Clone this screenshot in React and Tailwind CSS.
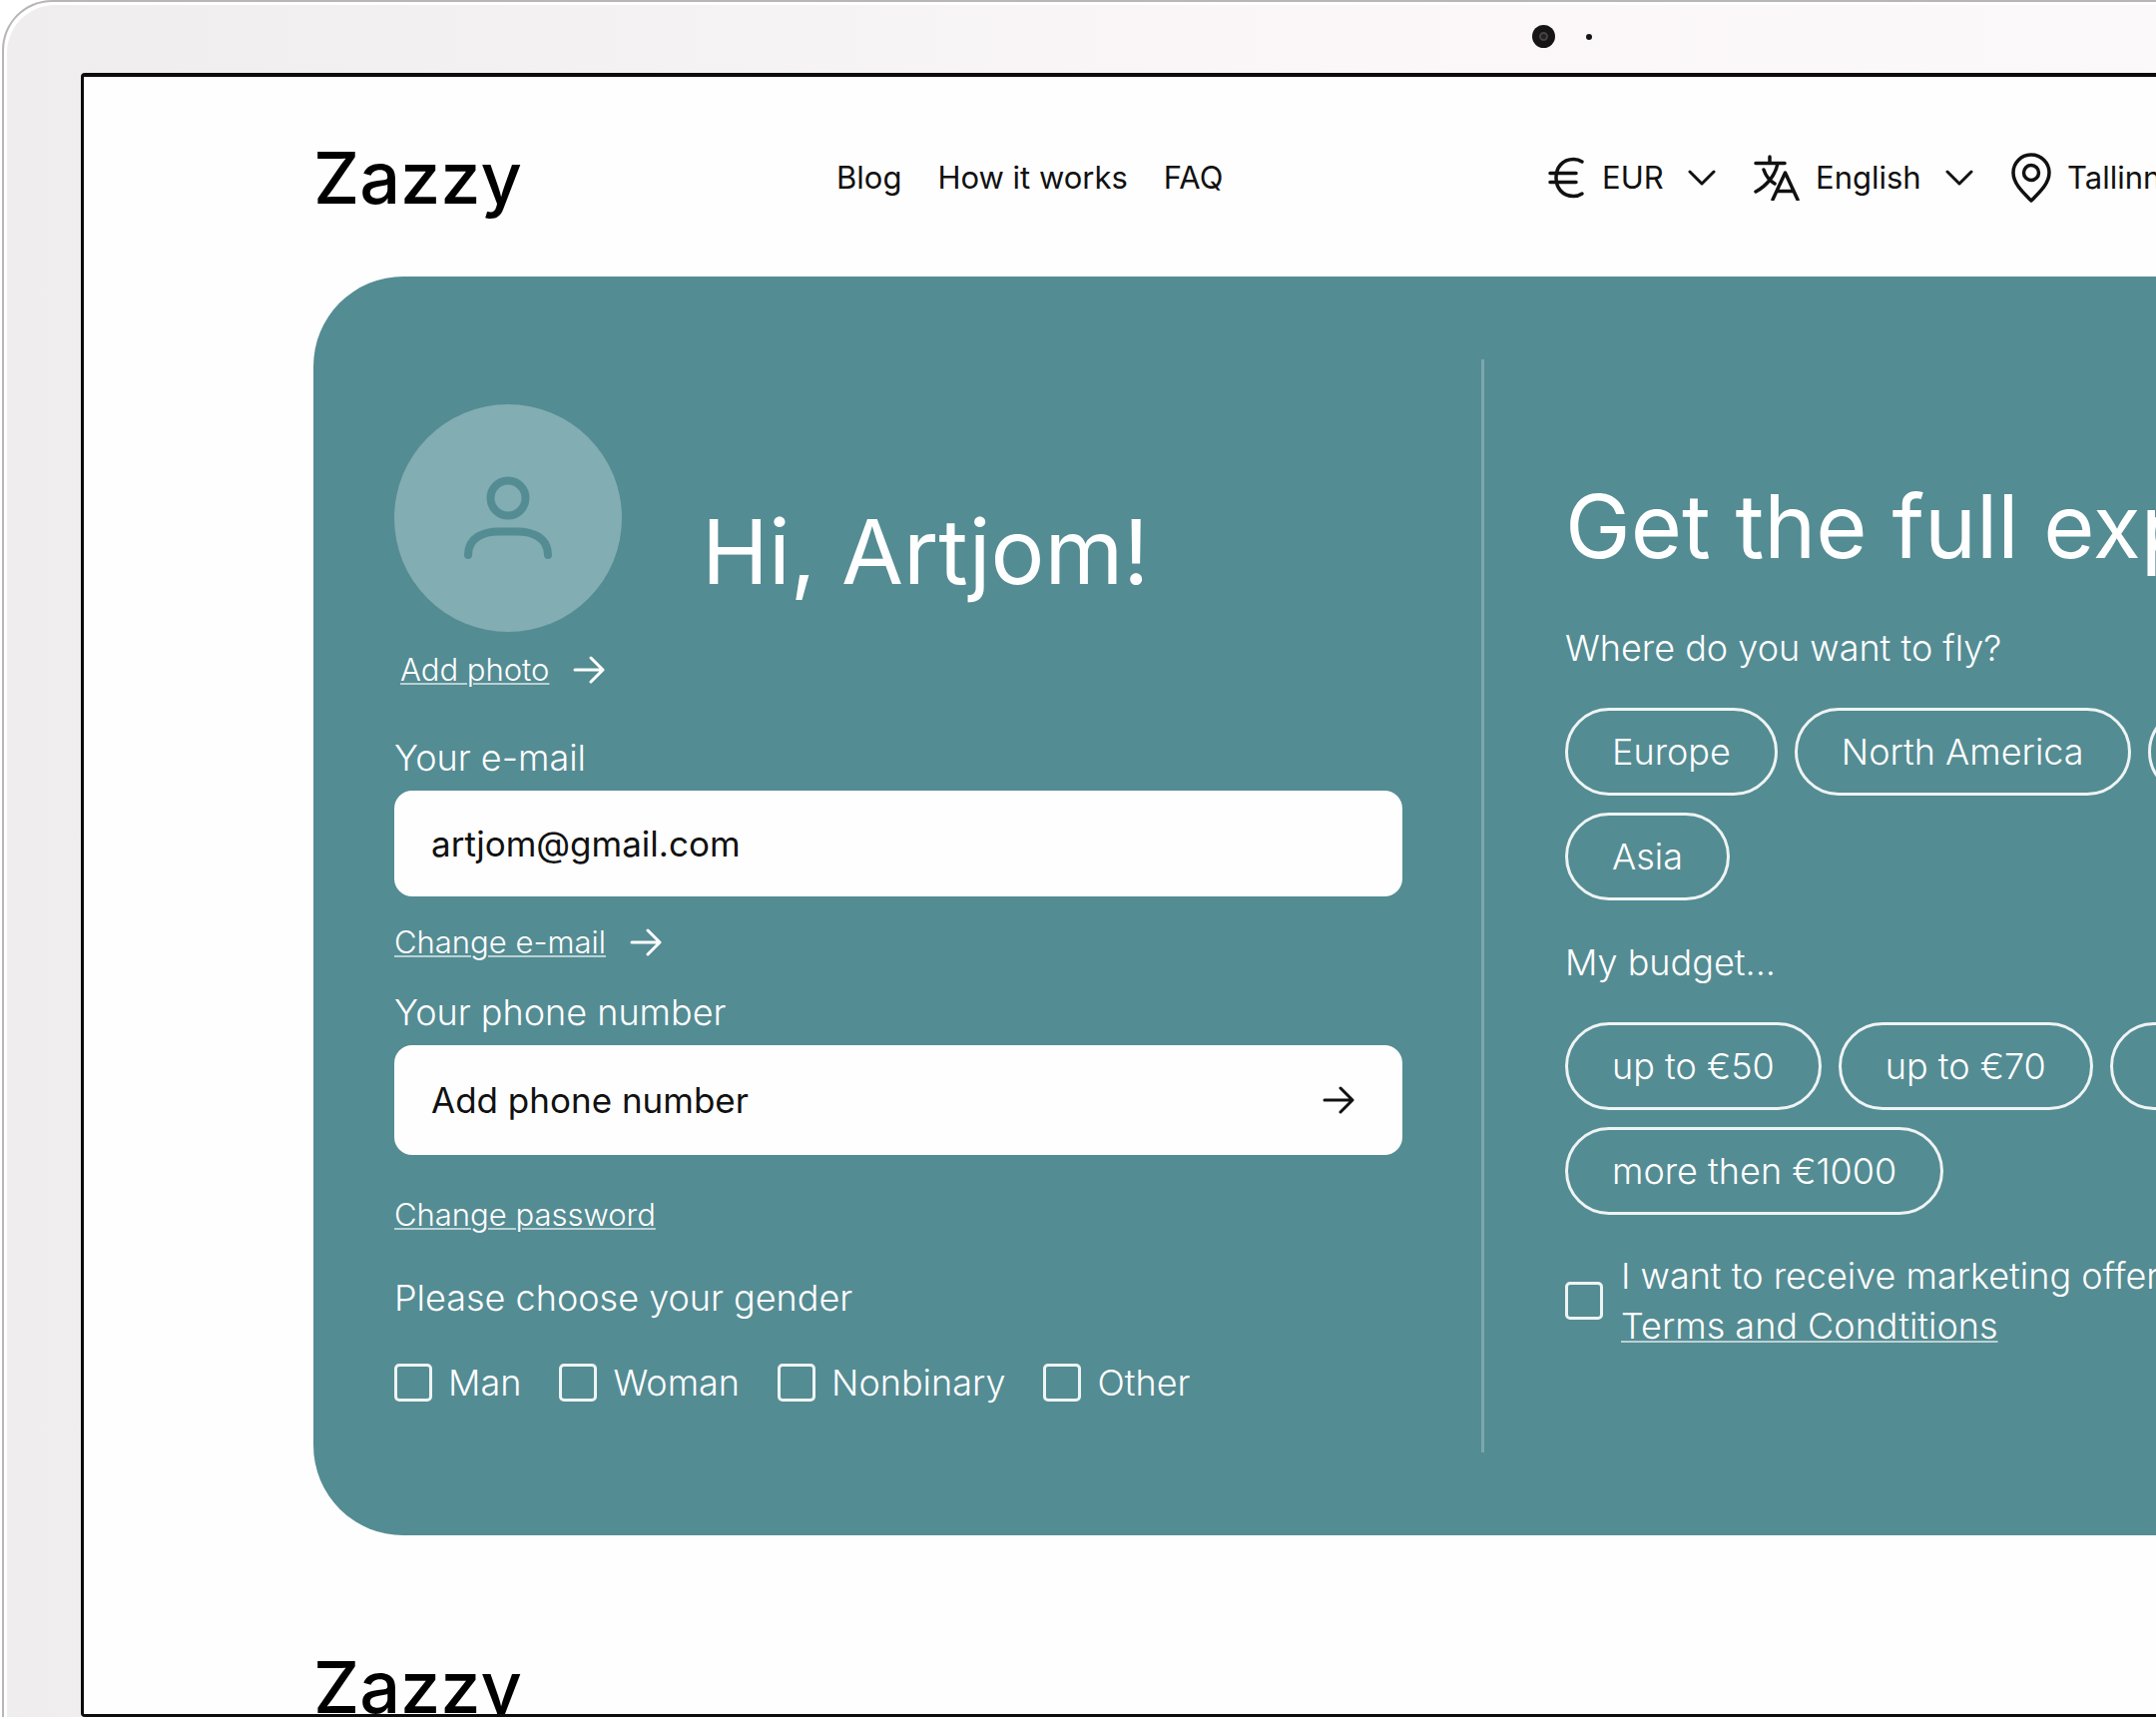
import React from "react";

const Arrow = ({ className }) => (
  <svg viewBox="0 0 32 28" className={className} fill="none" stroke="currentColor" strokeWidth="3" strokeLinecap="round" strokeLinejoin="round" aria-hidden="true">
    <path d="M2 14h28M18 2l12 12-12 12" />
  </svg>
);

const Chevron = () => (
  <svg viewBox="0 0 28 16" className="pointer-events-none h-4 w-7" fill="none" stroke="currentColor" strokeWidth="3" strokeLinecap="round" strokeLinejoin="round" aria-hidden="true">
    <path d="M2 2l12 12L26 2" />
  </svg>
);

const Euro = () => (
  <svg viewBox="0 0 38 42" className="h-[42px] w-[38px]" fill="none" stroke="currentColor" strokeWidth="3.500" strokeLinecap="round" aria-hidden="true">
    <path d="M34 5C31 3 29 2.500 25.500 2.500 14 2.500 8 11 8 21s6 18.500 17.500 18.500c3.500 0 5.500-.5 8.500-2.500M2 16.500h26M2 25.500h26" />
  </svg>
);

const Translate = () => (
  <svg viewBox="0 0 46 46" className="h-[46px] w-[46px]" fill="none" stroke="currentColor" strokeWidth="3.500" strokeLinecap="round" strokeLinejoin="round" aria-hidden="true">
    <path d="M16 2v6M2 8.500h29M24 8.500C22 20 13 31 2 37M10 15c2 6 6 11 11 14M19 45l12.500-27L44 45M24 36.500h15" />
  </svg>
);

const Pin = () => (
  <svg viewBox="0 0 40 50" className="h-[50px] w-10" fill="none" stroke="currentColor" strokeWidth="3.500" strokeLinejoin="round" aria-hidden="true">
    <path d="M20 48C12 40 2 31 2 20a18 18 0 0 1 36 0c0 11-10 20-18 28z" />
    <circle cx="20" cy="20" r="7.500" />
  </svg>
);

const Picker = ({ icon, label, value, chevron = true }) => (
  <label className="flex shrink-0 items-center">
    {icon}
    <select aria-label={label} className="ml-4 appearance-none bg-transparent text-[31px] leading-10 outline-none">
      <option>{value}</option>
    </select>
    {chevron && <span className="ml-6"><Chevron /></span>}
  </label>
);

const Logo = () => (
  <a href="#" className="text-[72px] font-medium leading-[80px] text-black">Zazzy</a>
);

const Check = ({ id }) => (
  <input id={id} type="checkbox" className="h-[38px] w-[38px] shrink-0 appearance-none rounded-[5px] border-[3px] border-white/90 checked:bg-white" />
);

const Pill = ({ children }) => (
  <button type="button" className="h-[88px] shrink-0 rounded-full border-[3px] border-white/90 px-[44px] text-[36px] font-light leading-10">
    {children}
  </button>
);

const genders = ["Man", "Woman", "Nonbinary", "Other"];

export default function App() {
  return (
    <div className="h-screen overflow-hidden bg-white pl-[2px] font-['Inter',sans-serif] text-[#111]">
      <div className="flex h-full flex-col rounded-tl-[50px] border-l-2 border-t-2 border-[#b9b6b8] bg-linear-to-r from-[#efedee] via-[#fbf7f8] via-60% to-[#fcf9fa] shadow-[inset_3px_3px_0_#fff]">
        <div className="flex h-[71px] shrink-0 items-center gap-[31px] pb-[2px] pl-[1531px]">
          <span className="flex h-[23px] w-[23px] items-center justify-center rounded-full bg-[#161415]">
            <span className="h-[9px] w-[9px] rounded-full border-2 border-[#444] bg-[#222]" />
          </span>
          <span className="h-[6px] w-[6px] rounded-full bg-[#161415]" />
        </div>
        <div className="ml-[77px] min-h-0 flex-1 overflow-hidden rounded-l-[4px] border-b-[3px] border-l-[3px] border-t-4 border-[#0d0b0d] bg-[#fefefe] pl-[230px]">
          <header className="grid h-[200px] grid-cols-[524px_713px_auto] items-center pt-[2px]">
            <Logo />
            <nav className="flex gap-9 text-[31px] leading-10">
              <a href="#">Blog</a>
              <a href="#" className="whitespace-nowrap">How it works</a>
              <a href="#">FAQ</a>
            </nav>
            <div className="flex items-center gap-[38px] whitespace-nowrap">
              <Picker icon={<Euro />} label="Currency" value="EUR" />
              <Picker icon={<Translate />} label="Language" value="English" />
              <Picker icon={<Pin />} label="City" value="Tallinn" chevron={false} />
            </div>
          </header>

          <main className="flex overflow-hidden rounded-l-[90px] bg-[#548c93] py-[83px] pl-[81px] text-[36px] font-light leading-10 text-white">
            <section className="flex w-[1010px] shrink-0 flex-col items-start pb-[50px] pt-[45px]">
              <div className="flex items-center gap-20">
                <div className="flex w-[228px] flex-col">
                  <div className="flex h-[228px] w-[228px] items-center justify-center rounded-full bg-[#82adb2] text-[#548c93]">
                    <svg viewBox="0 0 90 84" className="h-[84px] w-[90px]" fill="none" stroke="currentColor" strokeWidth="8" strokeLinecap="round" aria-hidden="true">
                      <circle cx="45" cy="22" r="17.500" />
                      <path d="M5 79C5 61 21 55.500 36 55.500h18c15 0 31 5.500 31 23.500" />
                    </svg>
                  </div>
                  <a href="#" className="mt-[18px] flex items-center gap-6 whitespace-nowrap pl-[6px] text-[31px]">
                    <span className="underline decoration-white/60 decoration-2 underline-offset-2">Add photo</span>
                    <Arrow className="h-7 w-8" />
                  </a>
                </div>
                <h1 className="whitespace-nowrap pt-[10px] text-[90px] font-normal leading-[96px]">Hi, Artjom!</h1>
              </div>

              <label htmlFor="email" className="mt-12">Your e-mail</label>
              <input id="email" type="email" defaultValue="artjom@gmail.com" className="mt-[13px] h-[106px] w-full rounded-[18px] bg-[#fefefe] px-[37px] text-[35px] font-normal text-[#111] outline-none" />
              <a href="#" className="mt-[26px] flex items-center gap-6 text-[31px]">
                <span className="underline decoration-white/60 decoration-2 underline-offset-2">Change e-mail</span>
                <Arrow className="h-7 w-8" />
              </a>

              <label htmlFor="phone" className="mt-[30px]">Your phone number</label>
              <div className="mt-[13px] flex h-[110px] w-full items-center rounded-[18px] bg-[#fefefe] pl-[37px] pr-12 text-[35px] font-normal text-[#111]">
                <input id="phone" type="tel" placeholder="Add phone number" className="min-w-0 flex-1 bg-transparent outline-none placeholder:text-[#111]" />
                <button type="button" aria-label="Save phone number"><Arrow className="h-7 w-8" /></button>
              </div>
              <a href="#" className="mt-10 text-[31px] underline decoration-white/60 decoration-2 underline-offset-2">Change password</a>

              <fieldset className="mt-[43px]">
                <legend>Please choose your gender</legend>
                <div className="mt-[45px] flex gap-[38px]">
                  {genders.map((g) => (
                    <div key={g} className="flex items-center gap-4">
                      <Check id={g} />
                      <label htmlFor={g}>{g}</label>
                    </div>
                  ))}
                </div>
              </fieldset>
            </section>

            <div className="ml-[79px] w-[3px] shrink-0 bg-[#7ba7ac]" />

            <section className="ml-[81px] shrink-0 whitespace-nowrap pt-[119px]">
              <h2 className="text-[88px] font-normal leading-[96px]">Get the full experience</h2>
              <p className="mt-[54px]">Where do you want to fly?</p>
              <div className="mt-10 flex gap-[17px]">
                <Pill>Europe</Pill>
                <Pill>North America</Pill>
                <Pill>South America</Pill>
              </div>
              <div className="mt-[17px] flex">
                <Pill>Asia</Pill>
              </div>
              <p className="mt-[42px]">My budget...</p>
              <div className="mt-10 flex gap-[17px]">
                <Pill>up to €50</Pill>
                <Pill>up to €70</Pill>
                <Pill>up to €100</Pill>
              </div>
              <div className="mt-[17px] flex">
                <Pill>more then €1000</Pill>
              </div>
              <div className="mt-[36px] flex items-center gap-[18px]">
                <Check id="offers" />
                <label htmlFor="offers" className="leading-[50px]">
                  I want to receive marketing offers
                  <br />
                  <a href="#" className="underline decoration-white/60 decoration-2 underline-offset-2">Terms and Condtitions</a>
                </label>
              </div>
            </section>
          </main>

          <footer className="pt-[112px]">
            <Logo />
          </footer>
        </div>
      </div>
    </div>
  );
}
